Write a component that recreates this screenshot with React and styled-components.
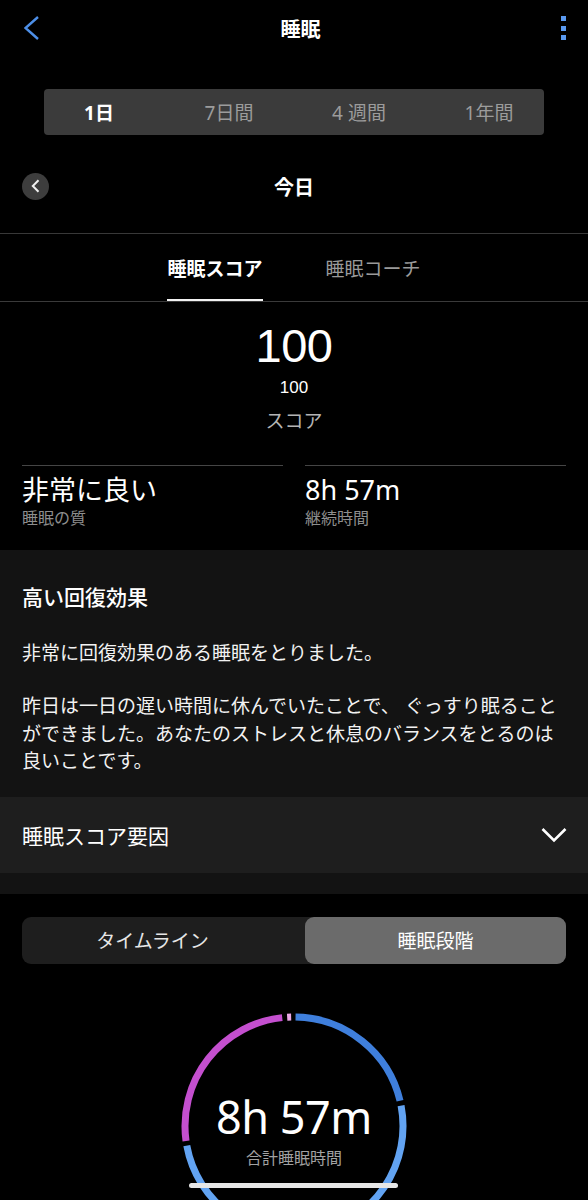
import React from 'react'
import styled, { createGlobalStyle } from 'styled-components';

const GlobalStyle = createGlobalStyle`
body{
  margin:0;
  background:#000;
  color:#fff;
  font-family:"Noto Sans","Noto Sans CJK JP",sans-serif;
}
`;
const Page = styled.div`
display:flex;
flex-direction:column;
width:588px;
background:#000;
`;
const Header = styled.div`
height:56px;
display:flex;
align-items:center;
justify-content:space-between;
padding:0 24px;
`;
const Title = styled.div`
font-size:20px;
font-weight:700;
`;
const Kebab = styled.div`
display:flex;
flex-direction:column;
gap:4.5px;
margin-right:-2px;
& span{
  width:5px;
  height:5px;
  background:#5a9af0;
}
`;
const Periods = styled.div`
margin:33px 44px 0;
height:46px;
background:#3b3b3b;
border-radius:4px;
display:grid;
grid-template-columns:repeat(4,130px);
justify-content:center;
align-items:center;
`;
const Period = styled.div`
text-align:center;
font-size:19px;
font-weight:${(p) => (p.active ? 700 : 400)};
color:${(p) => (p.active ? '#fff' : '#9c9c9c')};
`;
const DateRow = styled.div`
height:60px;
margin-top:21px;
padding:0 22px 17px;
border-bottom:1.5px solid #383838;
display:grid;
grid-template-columns:27px 1fr 27px;
align-items:center;
`;
const RoundBack = styled.div`
width:27px;
height:27px;
border-radius:50%;
background:#3d3d3d;
display:flex;
align-items:center;
justify-content:center;
`;
const DateText = styled.div`
text-align:center;
font-size:20px;
font-weight:700;
`;
const Tabs = styled.div`
display:flex;
justify-content:center;
gap:63px;
border-bottom:1px solid #3a3a3a;
`;
const Tab = styled.div`
height:62px;
padding-top:3px;
display:flex;
align-items:center;
font-size:19px;
font-weight:${(p) => (p.active ? 700 : 400)};
color:${(p) => (p.active ? '#fff' : '#9a9a9a')};
border-bottom:2px solid ${(p) => (p.active ? '#f2f2f2' : 'transparent')};
`;
const Score = styled.div`
display:flex;
flex-direction:column;
align-items:center;
padding-top:20px;
`;
const BigNumber = styled.div`
font-family:"Liberation Sans","Noto Sans",sans-serif;
font-size:47px;
line-height:1;
letter-spacing:-0.5px;
`;
const SmallNumber = styled.div`
font-family:"Liberation Sans","Noto Sans",sans-serif;
font-size:17px;
line-height:1;
margin-top:10px;
`;
const ScoreLabel = styled.div`
font-size:19px;
line-height:1;
margin-top:16px;
color:#b4b4b4;
`;
const Stats = styled.div`
display:grid;
grid-template-columns:1fr 1fr;
gap:22px;
padding:0 22px 21px;
margin-top:34px;
`;
const Stat = styled.div`
border-top:1.5px solid #454545;
padding-top:8px;
display:flex;
flex-direction:column;
`;
const StatValue = styled.div`
font-size:27px;
line-height:1.2;
`;
const StatLabel = styled.div`
font-size:16px;
line-height:1.3;
margin-top:2px;
color:#8e8e8e;
`;
const Card = styled.div`
background:#131313;
padding:33px 22px 21px;
`;
const CardTitle = styled.div`
font-size:21px;
font-weight:500;
line-height:1.4;
`;
const Para = styled.p`
margin:${(p) => p.gap}px 0 0;
font-size:19px;
line-height:27.5px;
color:#f2f2f2;
`;
const Accordion = styled.div`
height:76px;
background:#1e1e1e;
display:flex;
align-items:center;
justify-content:space-between;
padding:0 21px 0 22px;
font-size:21px;
`;
const Strip = styled.div`
height:21px;
background:#131313;
`;
const Toggle = styled.div`
margin:23px 22px 0;
height:47px;
background:#1e1e1e;
border-radius:9px;
display:grid;
grid-template-columns:1fr 1fr;
gap:22px;
`;
const ToggleItem = styled.div`
display:flex;
align-items:center;
justify-content:center;
border-radius:9px;
font-size:19px;
background:${(p) => (p.active ? '#6b6b6b' : 'transparent')};
color:${(p) => (p.active ? '#fff' : '#e6e6e6')};
`;
const RingBox = styled.div`
display:grid;
justify-content:center;
margin-top:42px;
& > *{
  grid-area:1/1;
}
`;
const RingText = styled.div`
display:flex;
flex-direction:column;
align-items:center;
padding-top:86px;
`;
const Total = styled.div`
font-size:45px;
line-height:1.1;
letter-spacing:-0.5px;
`;
const TotalLabel = styled.div`
font-size:16px;
line-height:1.3;
margin-top:7px;
color:#a2a2a2;
`;
const HomeBar = styled.div`
position:fixed;
left:189px;
bottom:12px;
width:209px;
height:5px;
border-radius:3px;
background:#e6e6e6;
`;

const C = 120;
const R = 109;
const polar = (deg) => {
  const a = (deg * Math.PI) / 180;
  return [C + R * Math.sin(a), C - R * Math.cos(a)];
};
const arc = (a1, a2) => {
  const [x1, y1] = polar(a1);
  const [x2, y2] = polar(a2);
  const large = a2 - a1 > 180 ? 1 : 0;
  return `M${x1} ${y1} A${R} ${R} 0 ${large} 1 ${x2} ${y2}`;
};
const segments = [
  { from: 0.8, to: 76.6, color: '#3f7fdc' },
  { from: 79.2, to: 259.6, color: '#62a3f2' },
  { from: 262.1, to: 353.8, color: '#c44fcf' },
  { from: 356.4, to: 358.5, color: '#eaa8e6' },
];

const periods = ['1日', '7日間', '4 週間', '1年間'];

function App() {
  return (
    <Page>
      <GlobalStyle />
      <Header>
        <svg width="16" height="24" viewBox="0 0 16 24">
          <path d="M14 1 L1.5 12 L14 23" fill="none" stroke="#4d8fe8" strokeWidth="2.4" />
        </svg>
        <Title>睡眠</Title>
        <Kebab><span /><span /><span /></Kebab>
      </Header>
      <Periods>
        {periods.map((p, i) => (
          <Period key={p} active={i === 0}>{p}</Period>
        ))}
      </Periods>
      <DateRow>
        <RoundBack>
          <svg width="10" height="14" viewBox="0 0 10 14">
            <path d="M7.5 1.2 L1.8 7 L7.5 12.8" fill="none" stroke="#f0f0f0" strokeWidth="2" />
          </svg>
        </RoundBack>
        <DateText>今日</DateText>
        <span />
      </DateRow>
      <Tabs>
        <Tab active>睡眠スコア</Tab>
        <Tab>睡眠コーチ</Tab>
      </Tabs>
      <Score>
        <BigNumber>100</BigNumber>
        <SmallNumber>100</SmallNumber>
        <ScoreLabel>スコア</ScoreLabel>
      </Score>
      <Stats>
        <Stat>
          <StatValue>非常に良い</StatValue>
          <StatLabel>睡眠の質</StatLabel>
        </Stat>
        <Stat>
          <StatValue>8h 57m</StatValue>
          <StatLabel>継続時間</StatLabel>
        </Stat>
      </Stats>
      <Card>
        <CardTitle>高い回復効果</CardTitle>
        <Para gap={27}>非常に回復効果のある睡眠をとりました。</Para>
        <Para gap={26}>
          昨日は一日の遅い時間に休んでいたことで、 ぐっすり眠ること<br />
          ができました。あなたのストレスと休息のバランスをとるのは<br />
          良いことです。
        </Para>
      </Card>
      <Accordion>
        睡眠スコア要因
        <svg width="26" height="16" viewBox="0 0 26 16">
          <path d="M1.5 2 L13 13.5 L24.5 2" fill="none" stroke="#fff" strokeWidth="2.6" />
        </svg>
      </Accordion>
      <Strip />
      <Toggle>
        <ToggleItem>タイムライン</ToggleItem>
        <ToggleItem active>睡眠段階</ToggleItem>
      </Toggle>
      <RingBox>
        <svg width="240" height="240" viewBox="0 0 240 240">
          {segments.map((s) => (
            <path key={s.from} d={arc(s.from, s.to)} fill="none" stroke={s.color} strokeWidth="7" />
          ))}
        </svg>
        <RingText>
          <Total>8h 57m</Total>
          <TotalLabel>合計睡眠時間</TotalLabel>
        </RingText>
      </RingBox>
      <HomeBar />
    </Page>
  )
}

export default App
